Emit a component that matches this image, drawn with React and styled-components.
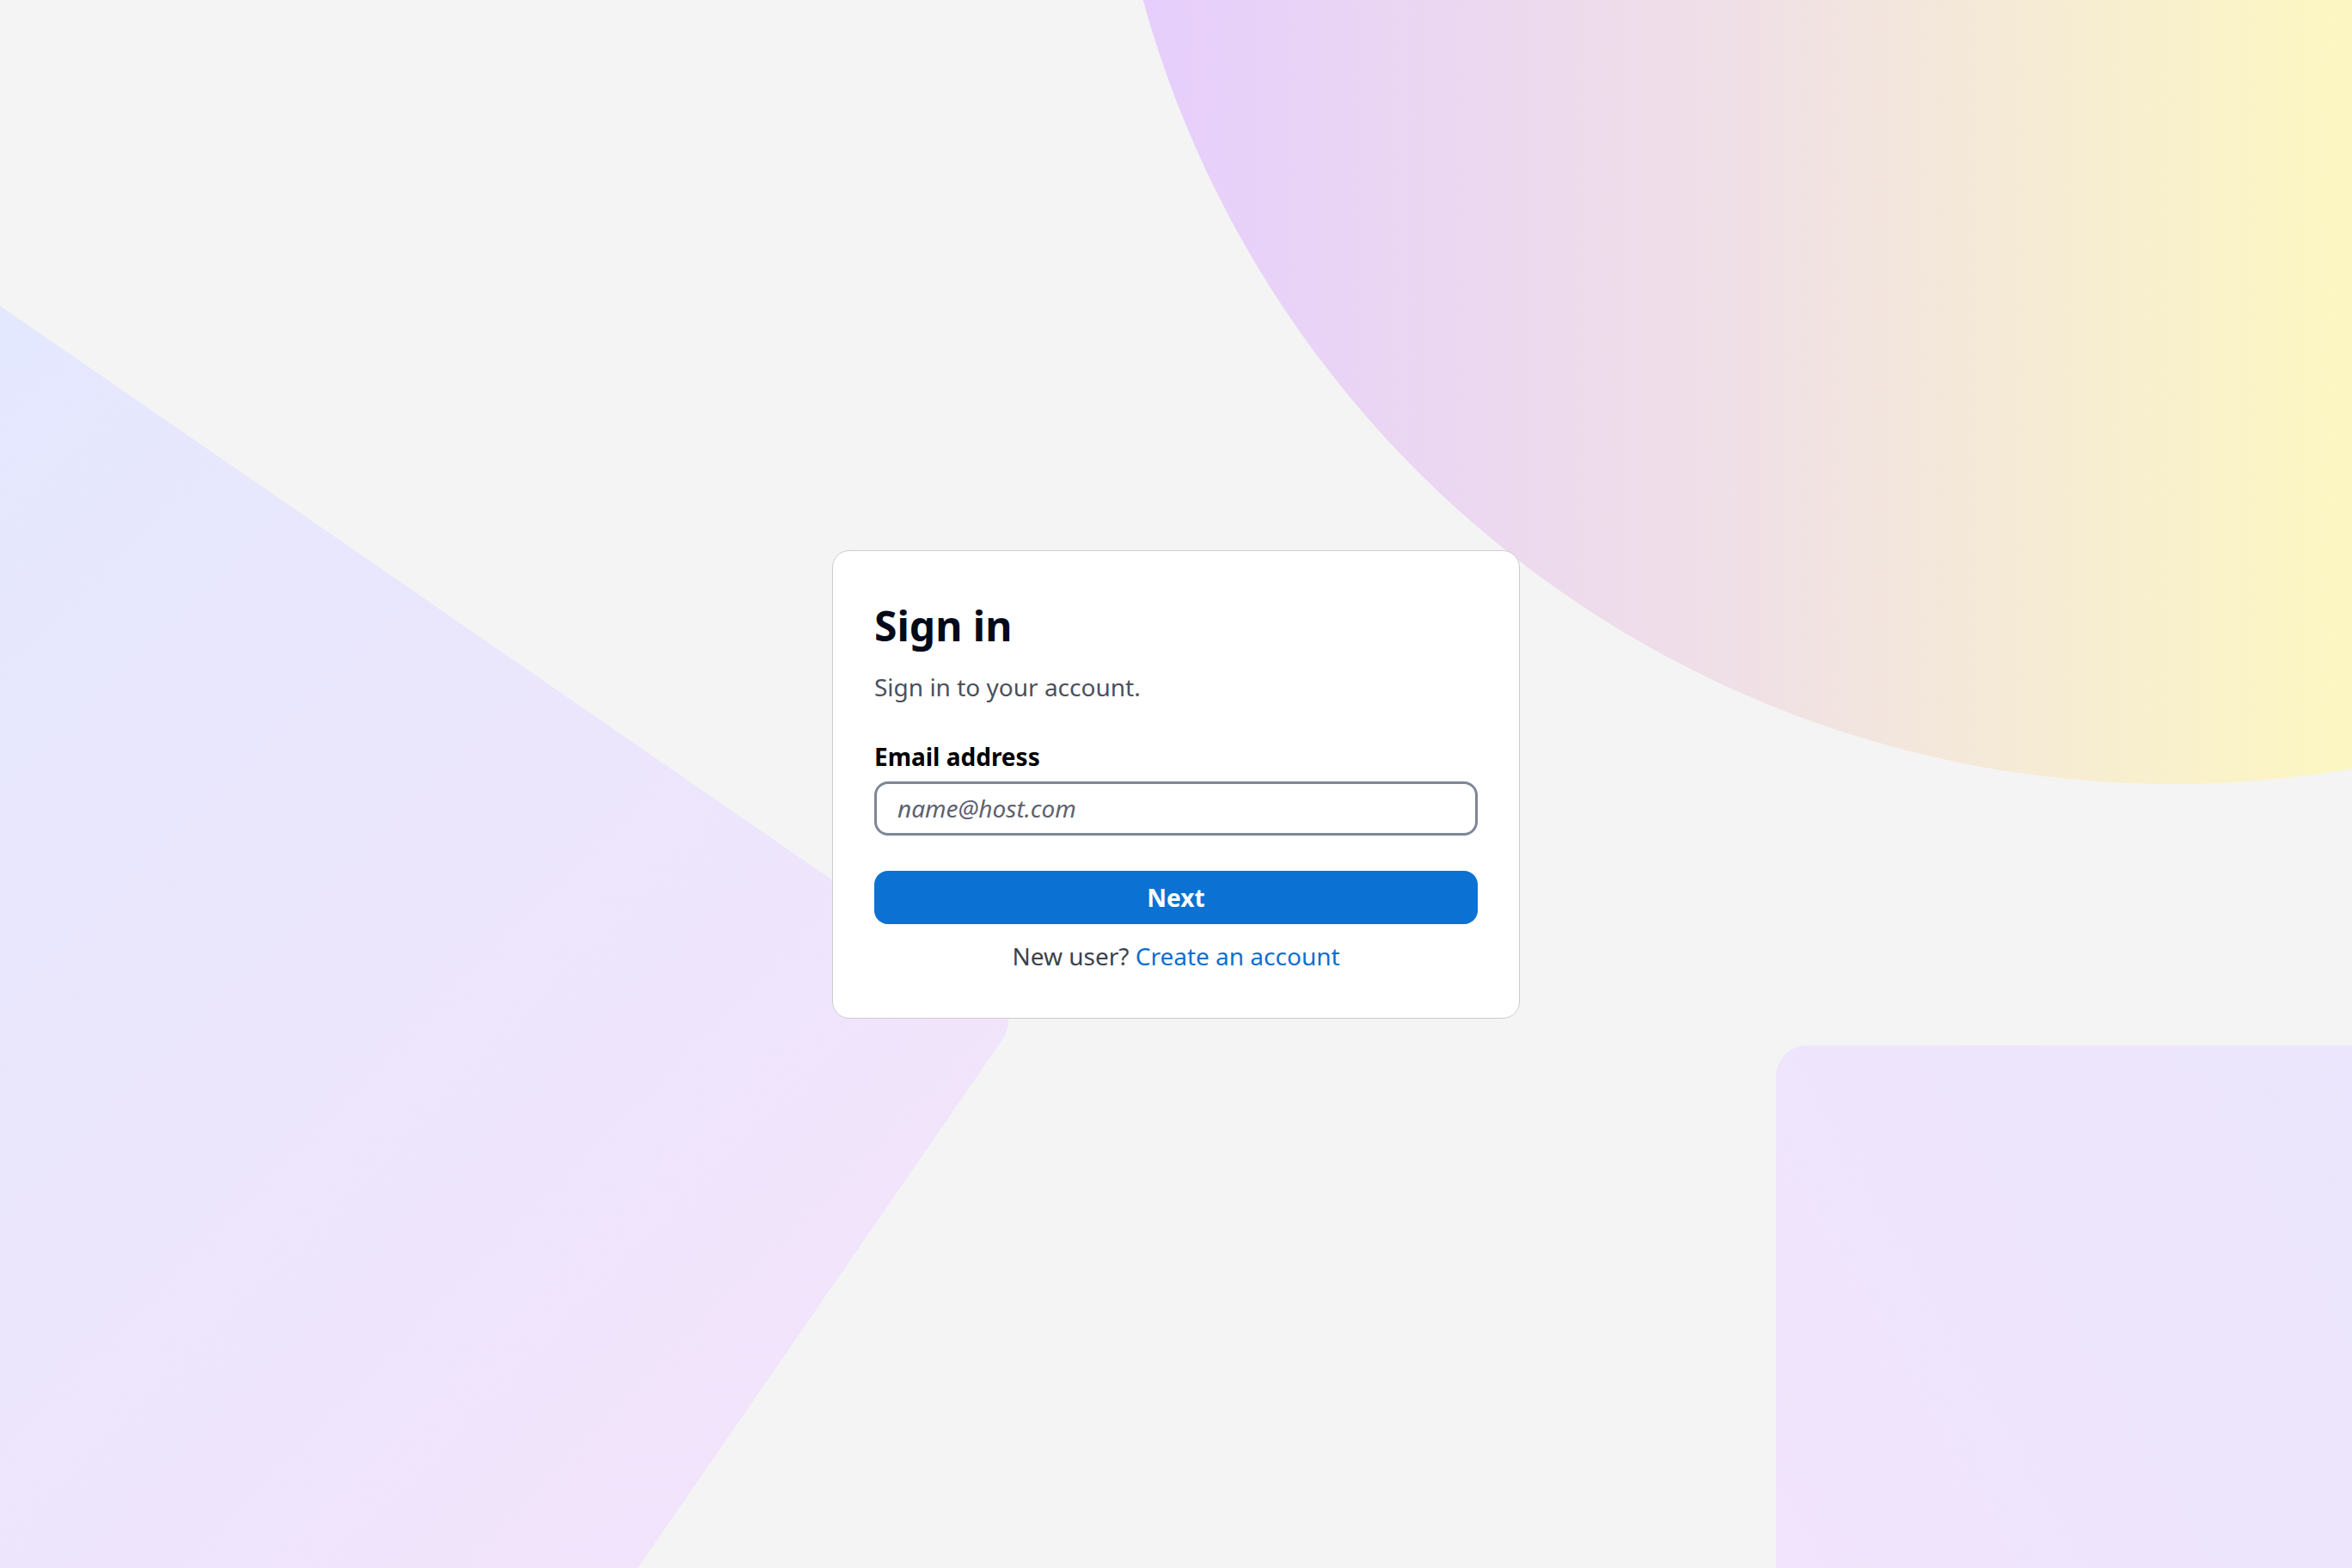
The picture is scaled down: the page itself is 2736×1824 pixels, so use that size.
import React from 'react';
import styled, { createGlobalStyle } from 'styled-components';

const GlobalStyle = createGlobalStyle`
  * {
    box-sizing: border-box;
  }
  html,
  body {
    margin: 0;
    padding: 0;
    background: #f4f4f4;
    font-family: 'Noto Sans', 'Open Sans', sans-serif;
  }
`;

const Page = styled.main`
  position: relative;
  width: 100vw;
  height: 100vh;
  overflow: hidden;
  display: flex;
  align-items: center;
  justify-content: center;
  background: #f4f4f4;
`;

// decorative background shapes, they sit behind the card on a free canvas
const Slab = styled.div`
  position: absolute;
  left: -411px;
  top: 1176px;
  width: 1600px;
  height: 1700px;
  border-radius: 40px;
  transform-origin: 100% 0;
  transform: rotate(34.6deg);
  background: linear-gradient(100deg, #e3e8fe 5%, #ece6fc 55%, #f3e3fb 100%);
`;

const Orb = styled.div`
  position: absolute;
  left: 1285px;
  top: -1572px;
  width: 2484px;
  height: 2484px;
  border-radius: 50%;
  background: linear-gradient(90deg, #e6cdfe 0%, #f0e0e6 30%, #fcf7c2 58%, #fdf9c0 100%);
`;

const Tile = styled.div`
  position: absolute;
  left: 2066px;
  top: 1216px;
  width: 1000px;
  height: 900px;
  border-radius: 36px;
  background: linear-gradient(60deg, #f2e3fb 0%, #eee5fc 40%, #e9e6fd 100%);
`;

const Card = styled.section`
  position: relative;
  z-index: 1;
  width: 800px;
  padding: 55px 48px 52px;
  background: #ffffff;
  border: 1px solid #cdcdd2;
  border-radius: 20px;
  display: flex;
  flex-direction: column;
`;

const Title = styled.h1`
  margin: 0;
  font-size: 48px;
  line-height: 64px;
  font-weight: 700;
  color: #030a1a;
`;

const Subtitle = styled.p`
  margin: 19px 0 0;
  font-size: 28px;
  line-height: 40px;
  color: #4b505c;
`;

const Label = styled.label`
  margin-top: 41px;
  font-size: 28px;
  line-height: 40px;
  font-weight: 700;
  color: #000000;
`;

const Input = styled.input`
  margin-top: 9px;
  width: 100%;
  height: 63px;
  padding: 0 24px;
  border: 3px solid #7f8796;
  border-radius: 16px;
  background: #ffffff;
  font-family: inherit;
  font-size: 28px;
  color: #1c1f26;
  outline: none;

  &::placeholder {
    font-style: italic;
    color: #5c6270;
  }
`;

const Button = styled.button`
  margin-top: 41px;
  width: 100%;
  height: 62px;
  border: none;
  border-radius: 16px;
  background: #0b72d3;
  color: #ffffff;
  font-family: inherit;
  font-size: 28px;
  font-weight: 700;
  cursor: pointer;
`;

const Footer = styled.p`
  margin: 17px 0 0;
  text-align: center;
  font-size: 28px;
  line-height: 40px;
  color: #3d414b;

  a {
    color: #0b6fd0;
    text-decoration: none;
  }
`;

export default function App() {
  return (
    <>
      <GlobalStyle />
      <Page>
        <Slab />
        <Orb />
        <Tile />
        <Card>
          <Title>Sign in</Title>
          <Subtitle>Sign in to your account.</Subtitle>
          <Label htmlFor="email">Email address</Label>
          <Input id="email" type="email" placeholder="name@host.com" />
          <Button type="button">Next</Button>
          <Footer>
            New user? <a href="#create">Create an account</a>
          </Footer>
        </Card>
      </Page>
    </>
  );
}
